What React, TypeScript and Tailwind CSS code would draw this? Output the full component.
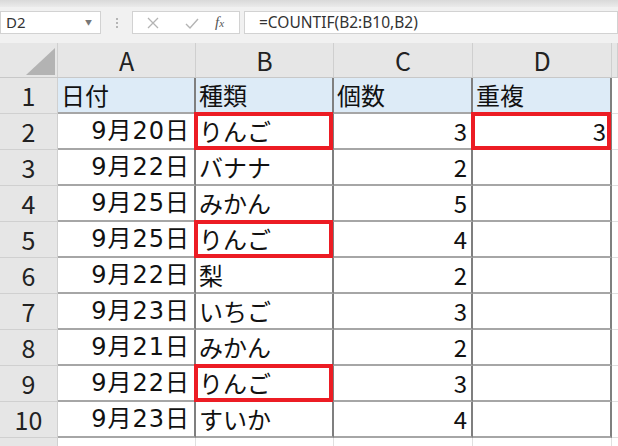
import React from "react";

const JP = "font-['Noto_Sans_CJK_JP','Noto_Sans',sans-serif]";
const NUM = "font-['DejaVu_Sans','Noto_Sans_CJK_JP',sans-serif]";

const rows = [
  { a: "9月20日", b: "りんご", c: "3", d: "3", mark: true },
  { a: "9月22日", b: "バナナ", c: "2" },
  { a: "9月25日", b: "みかん", c: "5" },
  { a: "9月25日", b: "りんご", c: "4", mark: true },
  { a: "9月22日", b: "梨", c: "2" },
  { a: "9月23日", b: "いちご", c: "3" },
  { a: "9月21日", b: "みかん", c: "2" },
  { a: "9月22日", b: "りんご", c: "3", mark: true },
  { a: "9月23日", b: "すいか", c: "4" },
];

const cols = "grid grid-cols-[58px_138px_138px_139px_139px_1fr]";
const cell = "relative h-[36px] border-b-2 border-r-2 border-b-[#a6a6a6] border-r-[#7f7f7f] flex items-center";

function RedBox() {
  return <div className="absolute -top-[2px] -left-[2px] -right-[1px] -bottom-[2px] border-[4px] border-[#ec1c24] pointer-events-none" />;
}

export default function App() {
  return (
    <div className={`w-[618px] h-[446px] overflow-hidden bg-[#f1f1f1] ${JP}`}>
      {/* 数式バー */}
      <div className="h-[7px] bg-gradient-to-b from-[#d9d9d9] to-[#ebebeb]" />
      <div className="flex items-center h-[28px] pt-[3px]">
        <div className="w-[101px] h-[23px] bg-white border border-[#d2d2d2] flex items-center justify-between pl-[5px] pr-[8px]">
          <span className="text-[15px] text-[#333] font-['Noto_Sans',sans-serif] leading-none">D2</span>
          <span className="text-[7px] text-[#777] leading-none">▼</span>
        </div>
        <div className="w-[31px] flex flex-col items-center gap-[2px]">
          <span className="w-[2px] h-[2px] bg-[#b5b5b5]" />
          <span className="w-[2px] h-[2px] bg-[#b5b5b5]" />
          <span className="w-[2px] h-[2px] bg-[#b5b5b5]" />
        </div>
        <div className="w-[108px] h-[23px] bg-white border border-[#d2d2d2] flex items-center">
          <svg width="38" height="20" viewBox="0 0 38 20" className="ml-[2px]">
            <path d="M13 5 L23 15 M23 5 L13 15" stroke="#b4b4b4" strokeWidth="1.3" fill="none" />
          </svg>
          <svg width="38" height="20" viewBox="0 0 38 20">
            <path d="M13 11 L17 15 L25 6" stroke="#b4b4b4" strokeWidth="1.4" fill="none" />
          </svg>
          <span className="ml-[4px] text-[15px] italic text-[#555] font-['Liberation_Serif',serif]">
            f<span className="text-[11px]">x</span>
          </span>
        </div>
        <div className="ml-[4px] flex-1 h-[23px] bg-white border border-[#d2d2d2] flex items-center pl-[14px]">
          <span className="text-[15.5px] text-[#333] font-['Noto_Sans',sans-serif] leading-none">=COUNTIF(B2:B10,B2)</span>
        </div>
      </div>

      {/* シート */}
      <div className="mt-[8px] bg-white">
        <div className={`${cols} h-[35px] bg-[#e6e6e6] border-b border-[#c8c8c8]`}>
          <div className="relative border-r border-[#d0d0d0]">
            <svg width="30" height="28" viewBox="0 0 30 28" className="absolute left-[26px] top-[5px]">
              <path d="M29 0 L29 27 L0 27 Z" fill="#b3b3b3" />
            </svg>
          </div>
          {["A", "B", "C", "D", ""].map((l, i) => (
            <div key={i} className="border-r border-[#cfcfcf] flex items-center justify-center text-[25px] text-[#222] leading-none">
              {l}
            </div>
          ))}
        </div>

        {/* 1行目 見出し */}
        <div className={cols}>
          <div className="h-[36px] bg-[#e6e6e6] border-b border-r border-[#d0d0d0] flex items-center justify-center text-[25px] text-[#222]">1</div>
          {["日付", "種類", "個数", "重複"].map((h) => (
            <div key={h} className={`${cell} bg-[#ddebf7] pl-[3px] text-[24px] text-[#111]`}>{h}</div>
          ))}
          <div className="h-[36px] border-b border-[#e0e0e0]" />
        </div>

        {rows.map((r, i) => (
          <div key={i} className={cols}>
            <div className="h-[36px] bg-[#e6e6e6] border-b border-r border-[#d0d0d0] flex items-center justify-center text-[25px] text-[#222]">
              {i + 2}
            </div>
            <div className={`${cell} ${NUM} justify-end pr-[4px] tracking-[1px] text-[24px] text-[#111]`}>{r.a}</div>
            <div className={`${cell} pl-[3px] text-[24px] text-[#111]`}>
              {r.b}
              {r.mark && <RedBox />}
            </div>
            <div className={`${cell} justify-end pr-[4px] text-[24px] text-[#111]`}>{r.c}</div>
            <div className={`${cell} justify-end pr-[4px] text-[24px] text-[#111]`}>
              {r.d}
              {r.d && <RedBox />}
            </div>
            <div className="h-[36px] border-b border-[#e0e0e0]" />
          </div>
        ))}

        <div className={cols}>
          <div className="h-[36px] bg-[#e6e6e6] border-r border-[#d0d0d0]" />
          <div className="h-[36px] border-r border-[#e0e0e0]" />
          <div className="h-[36px] border-r border-[#e0e0e0]" />
          <div className="h-[36px] border-r border-[#e0e0e0]" />
          <div className="h-[36px] border-r border-[#e0e0e0]" />
          <div />
        </div>
      </div>
    </div>
  );
}
